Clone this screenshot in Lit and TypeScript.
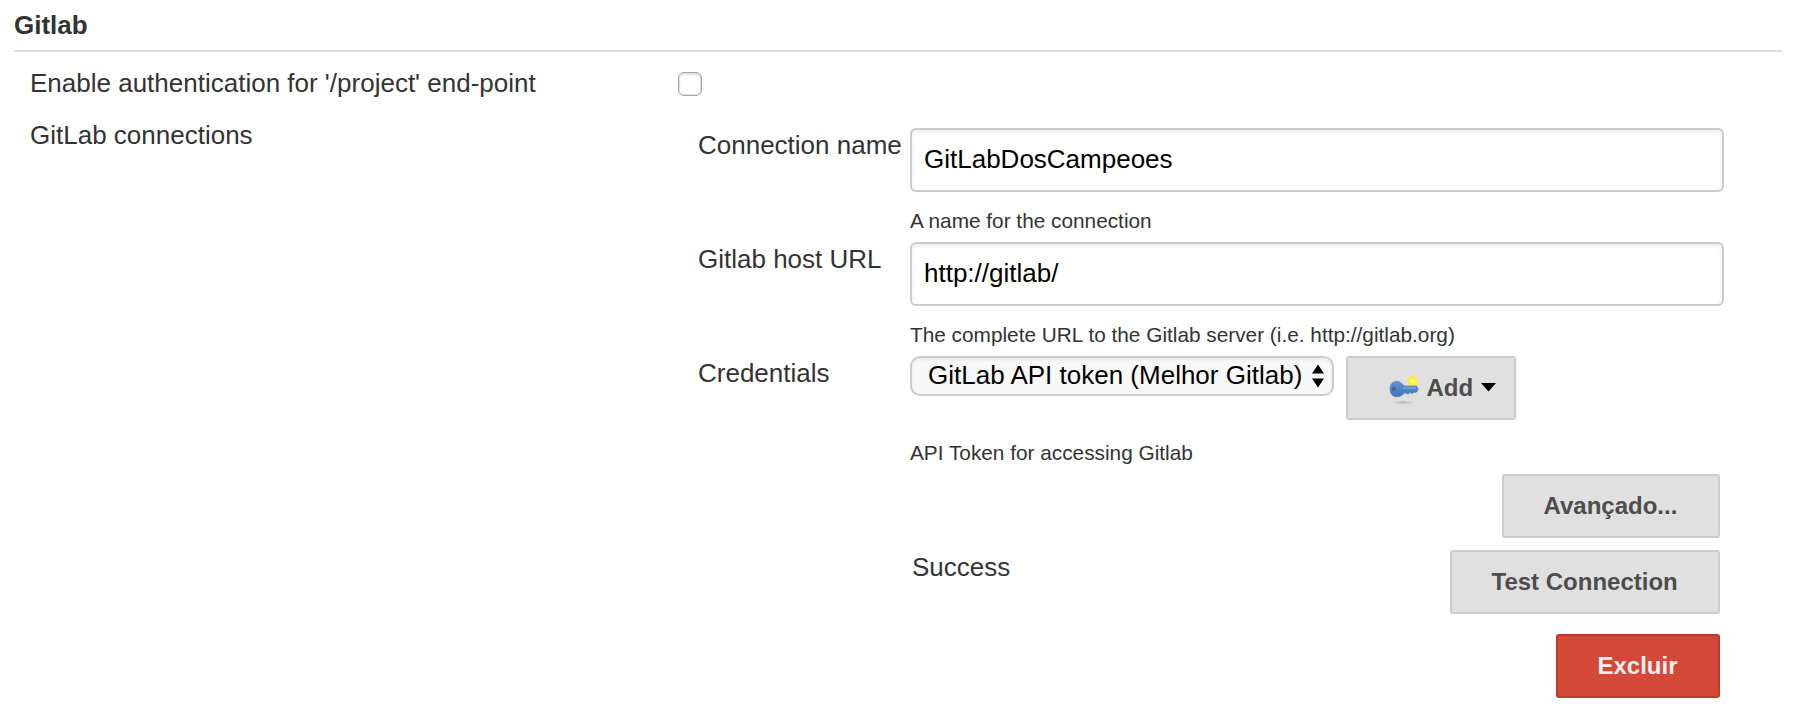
import { LitElement, html, css } from "lit";
import { customElement } from "lit/decorators.js";

@customElement("app-root")
export class AppRoot extends LitElement {
  static styles = css`
    :host {
      display: block;
      box-sizing: border-box;
      width: 1818px;
      height: 714px;
      padding: 10px 36px 0 14px;
      overflow: hidden;
      background: #fff;
      color: #333;
      font: 26px/30px "Liberation Sans", Helvetica, Arial, sans-serif;
    }
    * { box-sizing: border-box; }
    .title {
      margin: 0;
      padding-bottom: 10px;
      border-bottom: 2px solid #e0e0e0;
      font-size: 26px;
      line-height: 30px;
      font-weight: bold;
    }
    .row {
      display: grid;
      grid-template-columns: 648px 1fr;
      padding-left: 16px;
    }
    .auth { padding-top: 16px; height: 68px; }
    .check {
      appearance: none;
      display: block;
      width: 24px;
      height: 24px;
      margin: 4px 0 0;
      border: 1px solid #a6a6a6;
      border-radius: 6px;
      background: #fff;
      box-shadow: inset 0 0 0 1px #dedede, inset 0 2px 3px rgba(0, 0, 0, 0.12);
    }
    .connection {
      padding: 8px 58px 0 20px;
    }
    .entry {
      display: grid;
      grid-template-columns: 212px 1fr;
      grid-template-rows: 81px 23px;
      height: 114px;
    }
    .label { padding-top: 2px; white-space: nowrap; }
    .text {
      display: block;
      width: 814px;
      height: 64px;
      margin: 0;
      padding: 0 12px 2px;
      border: 2px solid #ccc;
      border-radius: 6px;
      outline: 0;
      background: #fff;
      box-shadow: inset 0 2px 4px rgba(0, 0, 0, 0.08);
      color: #000;
      font: inherit;
    }
    .help { grid-column: 2; font-size: 20.8px; line-height: 23px; }
    .credentials { height: 118px; grid-template-rows: 85px 23px; }
    .choice { display: flex; gap: 12px; align-items: flex-start; }
    .select {
      display: flex;
      justify-content: space-between;
      align-items: flex-start;
      width: 424px;
      height: 40px;
      padding: 2px 8px 0 16px;
      border: 2px solid #ccc;
      border-radius: 10px;
      background: #f8f8f8;
      box-shadow: inset 0 2px 3px rgba(0, 0, 0, 0.06);
      color: #000;
      font: inherit;
      line-height: 30px;
      white-space: nowrap;
    }
    .arrows { display: block; margin-top: 4px; }
    .button {
      display: flex;
      align-items: flex-start;
      height: 64px;
      margin: 0;
      padding: 16px 39.5px 0;
      border: 2px solid #ccc;
      border-radius: 3px;
      background: #e0e0e0;
      color: #4d4d4d;
      font: bold 24px/28px "Liberation Sans", Helvetica, Arial, sans-serif;
      white-space: nowrap;
    }
    .add { width: 170px; padding: 16px 0 0 38px; }
    .key { display: block; margin: -1px 6.5px 0 0; }
    .caret { display: block; margin: 9px 0 0 8px; }
    .actions {
      display: flex;
      justify-content: flex-end;
      padding: 0 4px 12px 0;
    }
    .advanced { width: 218px; }
    .test { justify-content: space-between; padding-left: 214px; padding-bottom: 20px; }
    .status { padding-top: 2px; }
    .test-button { width: 270px; }
    .danger { width: 164px; border-color: #bf3a2b; background: #d24939; color: #f2eeee; }
  `;

  private field(label: string, value: string, help: string) {
    return html`<div class="entry">
      <label class="label">${label}</label>
      <input class="text" type="text" .value=${value} />
      <div class="help">${help}</div>
    </div>`;
  }

  render() {
    return html`
      <h2 class="title">Gitlab</h2>
      <div class="row auth">
        <div>Enable authentication for '/project' end-point</div>
        <input class="check" type="checkbox" />
      </div>
      <div class="row">
        <div>GitLab connections</div>
        <div class="connection">
          ${this.field("Connection name", "GitLabDosCampeoes", "A name for the connection")}
          ${this.field("Gitlab host URL", "http://gitlab/", "The complete URL to the Gitlab server (i.e. http://gitlab.org)")}
          <div class="entry credentials">
            <div class="label">Credentials</div>
            <div class="choice">
              <button class="select">
                <span>GitLab API token (Melhor Gitlab)</span>
                <svg class="arrows" width="12" height="24" viewBox="0 0 12 24">
                  <path d="M6 0.5L12 9.5H0zM6 23.5L0 14.500H12z" fill="#000" />
                </svg>
              </button>
              <button class="button add">
                <svg class="key" width="34" height="32" viewBox="0 0 34 32">
                  <defs>
                    <radialGradient id="shade">
                      <stop offset="0" stop-color="#999" stop-opacity="0.65" />
                      <stop offset="1" stop-color="#bbb" stop-opacity="0" />
                    </radialGradient>
                    <radialGradient id="glow">
                      <stop offset="0" stop-color="#fffdb0" />
                      <stop offset="0.4" stop-color="#fff53a" />
                      <stop offset="0.75" stop-color="#f8ee3c" />
                      <stop offset="1" stop-color="#f0ea70" stop-opacity="0" />
                    </radialGradient>
                    <linearGradient id="steel" x1="0" y1="0" x2="0" y2="1">
                      <stop offset="0" stop-color="#6597d2" />
                      <stop offset="1" stop-color="#3d72b8" />
                    </linearGradient>
                  </defs>
                  <ellipse cx="17" cy="29.500" rx="13" ry="2.500" fill="url(#shade)" />
                  <circle cx="26.700" cy="8.300" r="6" fill="url(#glow)" />
                  <path d="M4 16Q4 11 7.500 9Q11 7.500 14.500 9.500Q17 11 18 13H30.500Q32 14 32 16.500Q31.500 18.500 30 19.500L28 19L26.500 20.500L24 19.500L22 21L19.500 20H18Q16.500 22.500 13.500 23.500Q9.500 24.500 6.500 22.500Q4 20 4 16z" fill="url(#steel)" stroke="#5585c2" stroke-width="0.800" />
                  <path d="M17 15H30" stroke="#80abde" stroke-width="1.200" />
                  <circle cx="7.800" cy="16" r="2.200" fill="#416796" />
                </svg>
                <span>Add</span>
                <svg class="caret" width="15" height="9" viewBox="0 0 15 9">
                  <path d="M0 0H15L7.500 8.500z" fill="#000" />
                </svg>
              </button>
            </div>
            <div class="help">API Token for accessing Gitlab</div>
          </div>
          <div class="actions"><button class="button advanced">Avançado...</button></div>
          <div class="actions test">
            <span class="status">Success</span><button class="button test-button">Test Connection</button>
          </div>
          <div class="actions"><button class="button danger">Excluir</button></div>
        </div>
      </div>
    `;
  }
}
